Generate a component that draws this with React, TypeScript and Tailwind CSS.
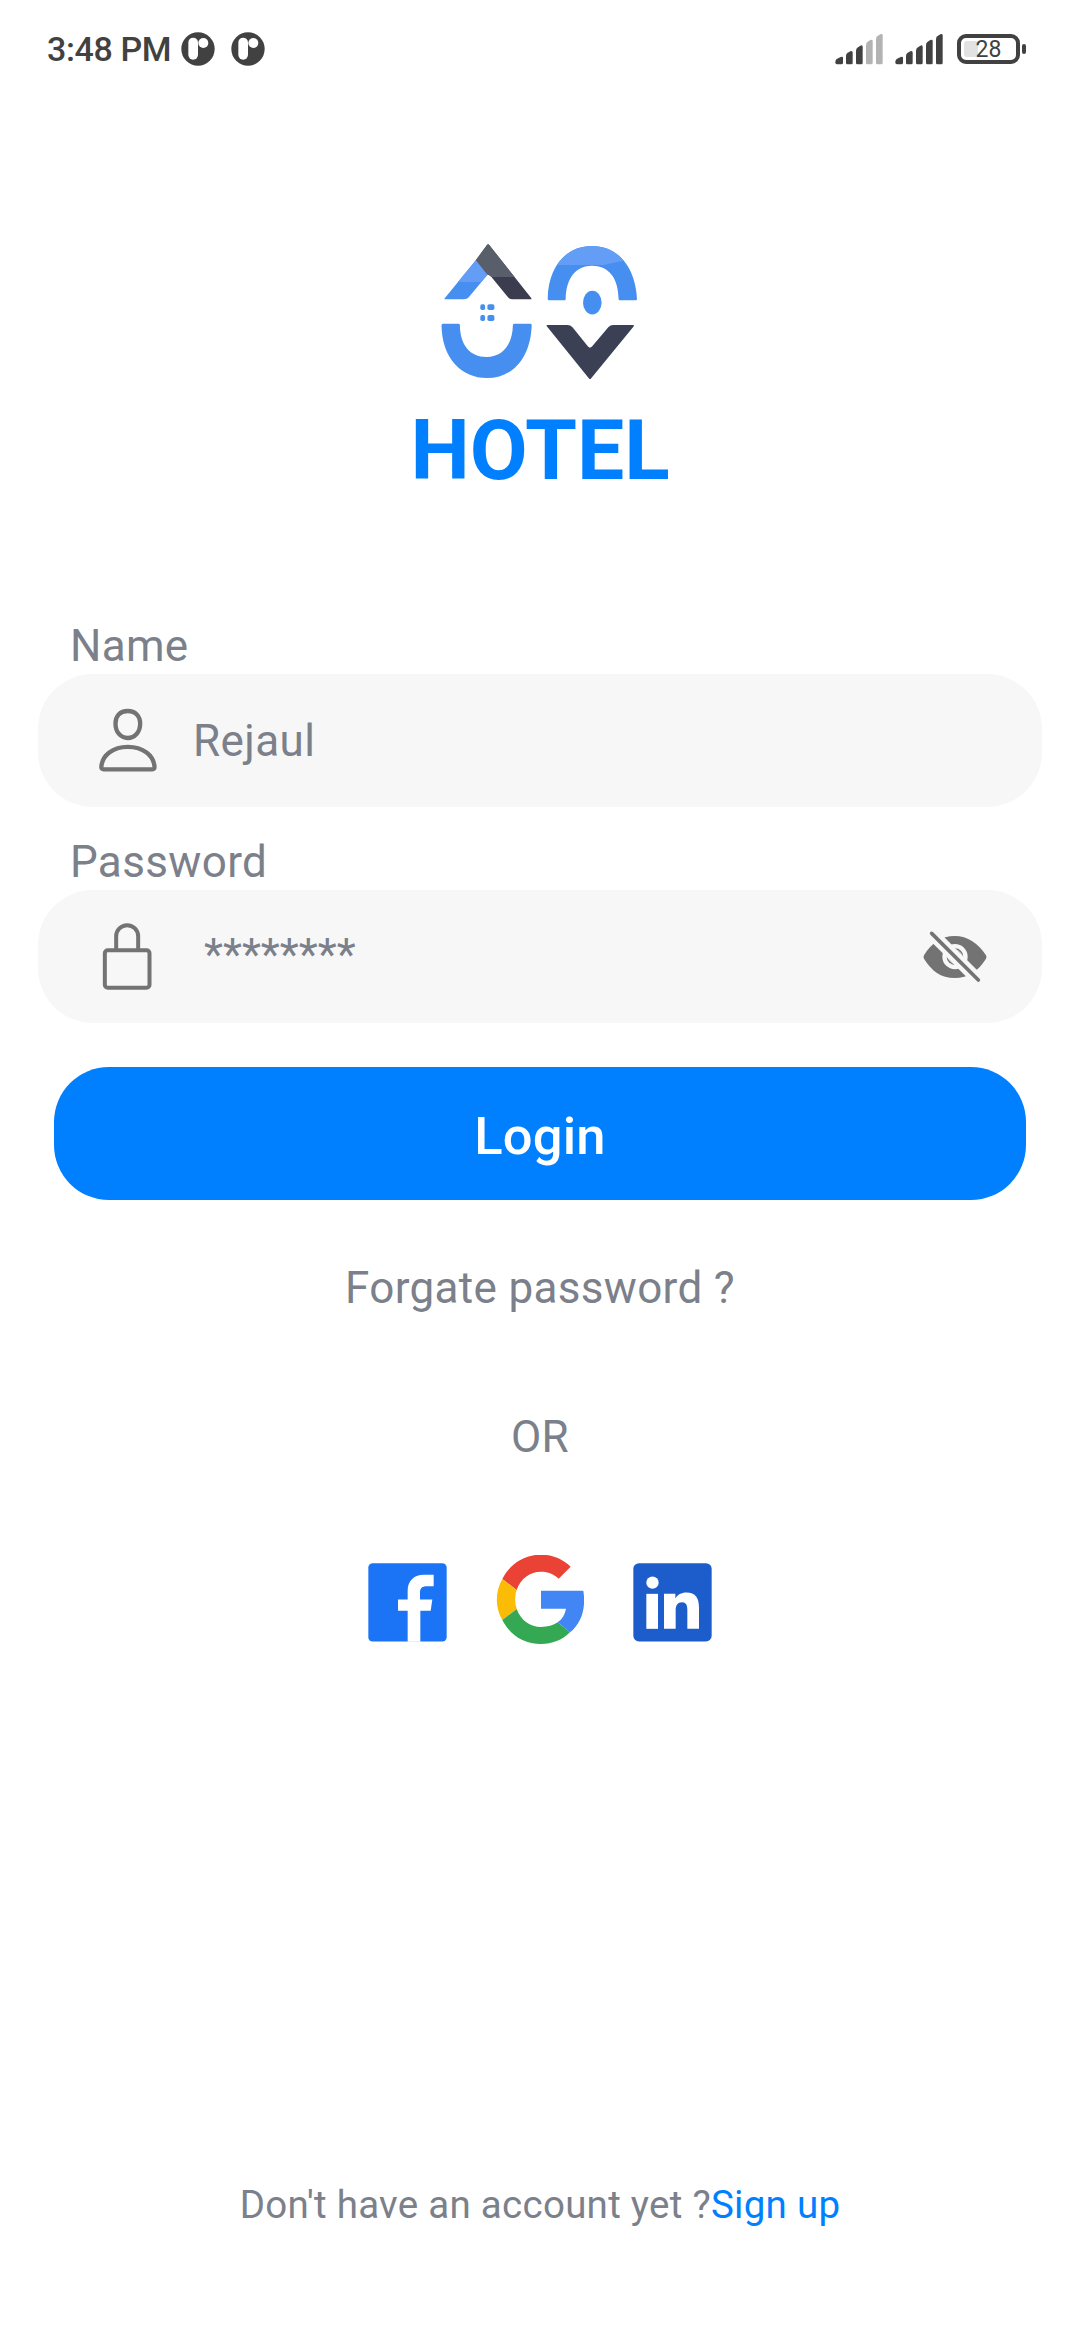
import React from "react";

function NotificationDot() {
  return (
    <svg width="34" height="34" viewBox="0 0 102 102">
      <circle cx="51" cy="51" r="50" fill="#414141" />
      <rect x="22" y="17" width="29" height="66" rx="14.5" fill="#fff" />
      <circle cx="67" cy="33" r="15" fill="#fff" />
    </svg>
  );
}

const BARS = [
  "M46 129 Q46 122 50 119 L62 113 Q69 110 69 116 V130 Q69 135 64 135 H51 Q46 135 46 129Z",
  "M78 110 Q78 104 82 101 L91 96 Q98 93 98 100 V130 Q98 135 94 135 H82 Q78 135 78 130Z",
  "M108 95 Q108 88 112 85 L121 79 Q128 76 128 83 V130 Q128 135 124 135 H112 Q108 135 108 130Z",
  "M138 78 Q138 71 142 68 L151 62 Q158 59 158 65 V130 Q158 135 154 135 H142 Q138 135 138 130Z",
  "M168 60 Q168 54 172 51 L181 45 Q188 42 188 48 V130 Q188 135 184 135 H172 Q168 135 168 130Z",
];

function Signal({ strength }: { strength: number }) {
  return (
    <svg width="48" height="32" viewBox="45 41 144 96">
      {BARS.map((d, i) => (
        <path key={i} d={d} fill={i < strength ? "#414141" : "#b3b3b3"} />
      ))}
    </svg>
  );
}

function Battery() {
  return (
    <div className="ml-0.5 flex items-center">
      <div className="relative flex h-[30px] w-[63px] items-center justify-center rounded-[9px] border-4 border-[#414141]">
        <div className="absolute left-[3px] top-[3px] h-4 w-[14px] rounded-[3px] bg-[#e2e2e2]" />
        <span className="relative pt-px text-[23px] leading-[22px] text-[#414141]">28</span>
      </div>
      <div className="ml-[2px] h-[10px] w-1 rounded-[2px] bg-[#414141]" />
    </div>
  );
}

function HotelLogo() {
  return (
    <svg width="200" height="140" viewBox="440 242 200 140">
      <defs>
        <clipPath id="roofTop">
          <rect x="440" y="240" width="47" height="42" />
        </clipPath>
        <clipPath id="slateTop">
          <rect x="470" y="240" width="70" height="37" />
        </clipPath>
        <clipPath id="archTop">
          <path d="M540 240H640V259Q618 261 604 265H540Z" />
        </clipPath>
      </defs>
      <g fill="#468ff1">
        <path d="M476 260 444.5 298.4Q444 299.3 445.5 299.3H464Q467 299.3 468.5 297.5L487.3 275Z" />
        <path d="M441.5 325.2Q441.5 323.7 443 323.7H458.5Q459.7 323.7 459.9 325C460 345 470 357 486.5 357S512.6 344 512.9 325Q513 323.7 514.3 323.7H530.5Q531.7 323.7 531.7 325.2C530.5 359 512 378 487 378S442 359 441.5 325.2Z" />
        <path d="M547.7 299C548 267 566 246 592 246S635.5 267 637 299Q637 300.3 635.6 300.3H619.7Q618.6 300.3 618.6 299C618.3 277 608 265.7 592 265.7S566 278 565.7 299Q565.7 300.3 564.3 300.3H549Q547.7 300.3 547.7 299Z" />
        <ellipse cx="592.3" cy="302.7" rx="9.3" ry="11.9" />
        <rect x="480.3" y="304.2" width="4.8" height="5.9" rx="1.8" />
        <rect x="487.4" y="304.2" width="7" height="5.9" rx="1.8" />
        <rect x="480.3" y="315.1" width="4.8" height="6" rx="1.8" />
        <rect x="487.4" y="315.1" width="7" height="6" rx="1.8" />
      </g>
      <g fill="#639df5">
        <path clipPath="url(#roofTop)" d="M476 260 444.5 298.4H466.7L487.3 275Z" />
        <path
          clipPath="url(#archTop)"
          d="M547.7 299C548 267 566 246 592 246S635.5 267 637 299H618.6C618.3 277 608 265.7 592 265.7S566 278 565.7 299Z"
        />
      </g>
      <path
        fill="#3b3d4e"
        d="M476 260 487 245Q488 243.7 489.2 245L531.2 298Q532 299.3 530.6 299.3H512Q509.6 299.3 508 297.3L491 276.5Q489.5 275 487.3 274.5Z"
      />
      <path
        fill="#585f6b"
        clipPath="url(#slateTop)"
        d="M476 260 487 245Q488 243.7 489.2 245L531.2 298H509L491 276.5Q489.5 275 487.3 274.5Z"
      />
      <path
        fill="#3b4054"
        d="M547 325H567.5Q570.5 325 572.5 327.2L588 346.5Q590 348.8 592 346.5L608.5 327Q610.5 325 613 325H633.2Q634.6 325 633.6 326.4L591 378.4Q590 379.6 589 378.4L547 326.6Q546 325 547 325Z"
      />
    </svg>
  );
}

function UserIcon() {
  return (
    <svg width="60" height="66" viewBox="203 324 180 198" fill="none" stroke="#737373" strokeWidth="13">
      <path d="M292 333C269 333 255.500 348 255.500 371C255.500 396 271 414 292 414S329.500 396 329.500 371C329.500 348 315 333 292 333Z" />
      <path d="M213 500C216 466 247 440.500 292.500 440.500S370 466 372.500 500Q373 508 366 508H220Q212.500 508 213 500Z" />
    </svg>
  );
}

function LockIcon() {
  return (
    <svg width="52" height="70" viewBox="214 305 156 210" fill="none" stroke="#737373" strokeWidth="12">
      <rect x="225.500" y="390" width="134" height="112" rx="9" />
      <path d="M259.500 389V348A32.500 33 0 0 1 325.500 348V389" />
    </svg>
  );
}

function EyeOffIcon() {
  return (
    <svg width="66" height="54" viewBox="125 147 198 162">
      <path
        fill="#737373"
        d="M131 223C152 187 184 165 223 165S294 187 317 223Q320 228 317 233C294 270 264 291 223 291S153 269 131 233Q128 228 131 223Z"
      />
      <circle cx="224" cy="227" r="38" fill="#f7f7f7" />
      <circle cx="224" cy="227" r="25" fill="#737373" />
      <circle cx="224" cy="227" r="20" fill="none" stroke="#f7f7f7" strokeWidth="2" />
      <path d="M136 139 312 315" stroke="#f7f7f7" strokeWidth="37" />
      <path d="M154 157 294 297" stroke="#737373" strokeWidth="11" strokeLinecap="round" />
    </svg>
  );
}

function FacebookLogo() {
  return (
    <svg width="79" height="79" viewBox="54 69.500 237 237">
      <rect x="55" y="70" width="235" height="235" rx="13" fill="#1b74f5" />
      <path
        fill="#fff"
        d="M173 306V213H144V179H173V153C173 122 193 105 222 105H251V139H231C216 139 210 145 210 158V179H247L242 213H211V306Z"
      />
    </svg>
  );
}

function GoogleLogo() {
  return (
    <svg width="88" height="89" viewBox="438 45 264 267">
      <path fill="#ea4335" d="M457 117C480 72 523 44 573 44C608 44 637 57 662 80L626 116C611 102 595 95 573 95C540 95 511 116 500 150Z" />
      <path fill="#fbbc05" d="M457 117 500 150C494 168 494 188 500 207L457 240C435 202 435 156 457 117Z" />
      <path fill="#34a853" d="M457 240 500 207C512 241 541 261 573 261C593 261 610 256 623 247L660 277C636 301 607 312 573 312C522 312 480 285 457 240Z" />
      <path fill="#4285f4" d="M573 152H700C708 202 696 248 660 277L623 247C637 237 645 223 648 206H573Z" />
    </svg>
  );
}

function LinkedInLogo() {
  return (
    <svg width="79" height="79" viewBox="852 69.500 237 237">
      <rect x="853" y="70" width="235" height="235" rx="17" fill="#1d5dcb" />
      <circle cx="910.500" cy="128.500" r="18.500" fill="#fff" />
      <path fill="#fff" d="M892 162H927V267H892Z" />
      <path
        fill="#fff"
        d="M945 162H979V176C985 165 997 158 1012 158C1040 158 1050 175 1050 204V267H1015V211C1015 195 1011 187 999 187C986 187 980 196 980 211V267H945Z"
      />
    </svg>
  );
}

export default function App() {
  return (
    <main className="flex h-[2340px] w-[1080px] flex-col overflow-hidden bg-white font-['Roboto',sans-serif] text-[44px] leading-[52px] text-[#7b808a]">
      <header className="flex h-[98px] items-center justify-between pl-[47px] pr-[54px]">
        <div className="flex items-center">
          <span className="w-[134px] whitespace-nowrap text-[34px] font-medium leading-10 tracking-[-0.4px] text-[#414141]">
            3:48 PM
          </span>
          <div className="flex gap-4">
            <NotificationDot />
            <NotificationDot />
          </div>
        </div>
        <div className="flex items-center gap-3">
          <Signal strength={3} />
          <Signal strength={5} />
          <Battery />
        </div>
      </header>

      <section className="mt-36 flex flex-col items-center">
        <HotelLogo />
        <h1 className="mt-5 text-[84px] font-bold leading-[98px] text-[#0080ff]">HOTEL</h1>
      </section>

      <form className="mt-[120px] flex flex-col px-[38px]">
        <label className="ml-8 tracking-[0.3px]">Name</label>
        <div className="mt-0.5 flex h-[133px] items-center rounded-[55px] bg-[#f7f7f7] pl-[60px]">
          <UserIcon />
          <span className="ml-[35px] tracking-[0.4px]">Rejaul</span>
        </div>
        <label className="ml-8 mt-[29px] tracking-[0.35px]">Password</label>
        <div className="mt-0.5 flex h-[133px] items-center rounded-[55px] bg-[#f7f7f7] pl-[63px] pr-[54px]">
          <LockIcon />
          <span className="mb-[3px] ml-[51px] flex-1">********</span>
          <EyeOffIcon />
        </div>
        <button
          type="button"
          className="mx-4 mt-11 h-[133px] rounded-[55px] bg-[#0080ff] pt-1 text-[52.5px] font-medium leading-[60px] tracking-[0.2px] text-white"
        >
          Login
        </button>
      </form>

      <a className="mt-[62px] text-center tracking-[0.33px]">Forgate password ?</a>
      <p className="mt-[97px] text-center tracking-[0.3px]">OR</p>

      <div className="mt-[92px] flex items-end justify-center gap-[49px]">
        <div className="mb-0.5">
          <FacebookLogo />
        </div>
        <GoogleLogo />
        <div className="mb-0.5">
          <LinkedInLogo />
        </div>
      </div>

      <p className="mb-[112px] mt-auto text-center text-[38.5px] leading-[46px] tracking-[0.27px]">
        Don't have an account yet ?<a className="text-[#0080ff]">Sign up</a>
      </p>
    </main>
  );
}
